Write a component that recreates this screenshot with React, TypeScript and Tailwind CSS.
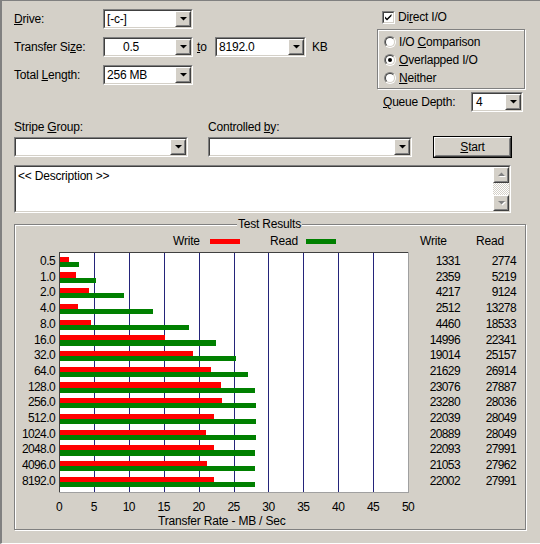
import React from "react";

const sizes = ["0.5", "1.0", "2.0", "4.0", "8.0", "16.0", "32.0", "64.0", "128.0", "256.0", "512.0", "1024.0", "2048.0", "4096.0", "8192.0"];
const writes = [1331, 2359, 4217, 2512, 4460, 14996, 19014, 21629, 23076, 23280, 22039, 20889, 22093, 21053, 22002];
const reads = [2774, 5219, 9124, 13278, 18533, 22341, 25157, 26914, 27887, 28036, 28049, 28049, 27991, 27962, 27991];

const ROW = 15.71;
const PX_PER_MB = 6.98;

const Sunken = ({ className = "", children }: { className?: string; children?: React.ReactNode }) => (
  <div className={`border border-t-[#808080] border-l-[#808080] border-r-white border-b-white ${className}`}>
    <div className="flex h-full w-full border border-t-[#404040] border-l-[#404040] border-r-[#d4d0c8] border-b-[#d4d0c8] bg-white">
      {children}
    </div>
  </div>
);

const Raised = ({ className = "", children }: { className?: string; children?: React.ReactNode }) => (
  <div className={`border border-t-white border-l-white border-r-[#404040] border-b-[#404040] ${className}`}>
    <div className="flex h-full w-full items-center justify-center border border-t-[#d4d0c8] border-l-[#d4d0c8] border-r-[#808080] border-b-[#808080] bg-[#d4d0c8]">
      {children}
    </div>
  </div>
);

const Arrow = ({ up = false, disabled = false }: { up?: boolean; disabled?: boolean }) => (
  <svg width="9" height="6" viewBox="0 0 9 6">
    {disabled && <path d={up ? "M2 5h7L5.5 1.5z" : "M2 2h7L5.5 5.5z"} fill="#fff" />}
    <path d={up ? "M1 4h7L4.5 0.5z" : "M1 1h7L4.5 4.5z"} fill={disabled ? "#808080" : "#000"} />
  </svg>
);

const Combo = ({ className = "", value = "", textClass = "pl-[2px]" }: { className?: string; value?: string; textClass?: string }) => (
  <Sunken className={`h-[20px] ${className}`}>
    <div className={`flex flex-1 items-center overflow-hidden whitespace-nowrap ${textClass}`}>{value}</div>
    <Raised className="h-full w-[16px]">
      <Arrow />
    </Raised>
  </Sunken>
);

const Radio = ({ checked = false }: { checked?: boolean }) => (
  <div className="h-[12px] w-[12px] rounded-full border border-t-[#808080] border-l-[#808080] border-r-white border-b-white">
    <div className="flex h-full w-full items-center justify-center rounded-full border border-t-[#404040] border-l-[#404040] border-r-[#d4d0c8] border-b-[#d4d0c8] bg-white">
      {checked && <div className="h-[4px] w-[4px] rounded-full bg-black" />}
    </div>
  </div>
);

const etched = "border border-[#808080] shadow-[inset_1px_1px_0_#fff,1px_1px_0_#fff]";

const Plot = () => (
  <svg width="350" height="241" viewBox="0 0 350 241" shapeRendering="crispEdges" className="block">
    <rect x="0" y="0" width="350" height="241" fill="#fff" />
    {[1, 2, 3, 4, 5, 6, 7, 8, 9].map((k) => (
      <line key={k} x1={k * 34.9 + 0.5} y1="1" x2={k * 34.9 + 0.5} y2="240" stroke="#24247a" strokeWidth="1" />
    ))}
    {sizes.map((s, i) => (
      <g key={s}>
        <rect x="1" y={4.7 + i * ROW} width={(writes[i] / 1000) * PX_PER_MB} height="5.2" fill="#ff0000" />
        <rect x="1" y={9.9 + i * ROW} width={(reads[i] / 1000) * PX_PER_MB} height="5.1" fill="#008000" />
      </g>
    ))}
    <line x1="0.5" y1="0" x2="0.5" y2="241" stroke="#404040" />
    <line x1="0" y1="0.5" x2="350" y2="0.5" stroke="#404040" />
    <line x1="349.5" y1="0" x2="349.5" y2="241" stroke="#a0a0a0" />
    <line x1="0" y1="240.5" x2="350" y2="240.5" stroke="#a0a0a0" />
  </svg>
);

const App = () => {
  return (
    <div className="flex h-[544px] w-[540px] flex-col overflow-hidden border-t border-l-2 border-b border-t-[#808080] border-l-[#808080] border-b-white bg-[#d4d0c8] font-['Liberation_Sans',Arial,sans-serif] text-[12px] leading-[14px] tracking-[-0.2px] text-black">
      {/* top settings */}
      <div className="flex h-[114px]">
        <div className="flex w-[375px] flex-col gap-[8px] pl-[12px] pt-[8px]">
          <div className="flex h-[20px] items-center">
            <span className="w-[89px]"><u>D</u>rive:</span>
            <Combo className="w-[90px]" value="[-c-]" />
          </div>
          <div className="flex h-[20px] items-center">
            <span className="w-[89px]">Transfer Si<u>z</u>e:</span>
            <Combo className="w-[90px]" value="0.5" textClass="pl-[18px]" />
            <span className="w-[22px] pl-[4px]"><u>t</u>o</span>
            <Combo className="w-[91px]" value="8192.0" />
            <span className="pl-[6px]">KB</span>
          </div>
          <div className="flex h-[20px] items-center">
            <span className="w-[89px]">Total <u>L</u>ength:</span>
            <Combo className="w-[90px]" value="256 MB" />
          </div>
        </div>

        <div className="flex w-[148px] flex-col pt-[9px]">
          <div className="flex h-[14px] items-center pl-[5px]">
            <Sunken className="h-[13px] w-[13px]">
              <svg width="9" height="9" viewBox="0 0 9 9" className="m-auto">
                <path d="M1 3.5l2 2L7.5 1v2L3 7.5 1 5.5z" fill="#000" />
              </svg>
            </Sunken>
            <span className="pl-[3px]">Di<u>r</u>ect I/O</span>
          </div>
          <div className={`mt-[5px] flex h-[60px] shrink-0 flex-col pl-[6px] pt-[3px] ${etched}`}>
            {[
              { label: <>I/O <u>C</u>omparison</>, checked: false },
              { label: <><u>O</u>verlapped I/O</>, checked: true },
              { label: <><u>N</u>either</>, checked: false },
            ].map((r, i) => (
              <div key={i} className="flex h-[18px] shrink-0 items-center gap-[3px]">
                <Radio checked={r.checked} />
                <span>{r.label}</span>
              </div>
            ))}
          </div>
          <div className="mt-[3px] flex h-[20px] items-center pl-[6px]">
            <span className="w-[88px]"><u>Q</u>ueue Depth:</span>
            <Combo className="w-[52px]" value="4" textClass="pl-[3px]" />
          </div>
        </div>
      </div>

      {/* stripe / controlled / start */}
      <div className="flex items-end pl-[12px] pt-[5px]">
        <div className="flex w-[174px] flex-col gap-[3px]">
          <span>Stripe <u>G</u>roup:</span>
          <Combo className="w-full" />
        </div>
        <div className="ml-[20px] flex w-[204px] flex-col gap-[3px]">
          <span>Controlled <u>b</u>y:</span>
          <Combo className="w-full" />
        </div>
        <div className="mb-[-1px] ml-[21px] h-[22px] w-[79px] border border-black">
          <Raised className="h-full w-full">
            <span><u>S</u>tart</span>
          </Raised>
        </div>
      </div>

      {/* description */}
      <Sunken className="ml-[12px] mt-[8px] h-[48px] w-[497px]">
        <div className="flex-1 pl-[2px] pt-[2px]">&lt;&lt; Description &gt;&gt;</div>
        <div className="flex w-[16px] flex-col">
          <Raised className="h-[16px] w-[16px]">
            <Arrow up disabled />
          </Raised>
          <div className="flex-1 bg-[repeating-conic-gradient(#ffffff_0_25%,#d4d0c8_0_50%)] bg-[length:2px_2px]" />
          <Raised className="h-[16px] w-[16px]">
            <Arrow disabled />
          </Raised>
        </div>
      </Sunken>

      {/* test results */}
      <div className={`relative ml-[12px] mt-[11px] h-[306px] w-[512px] ${etched}`}>
        <span className="absolute left-[222px] top-[-8px] bg-[#d4d0c8] px-[1px]">Test Results</span>

        <div className="mt-[9px] flex h-[14px] items-center pl-[158px]">
          <span className="w-[37px]">Write</span>
          <div className="h-[5px] w-[30px] bg-[#ff0000]" />
          <span className="box-content w-[36px] pl-[30px]">Read</span>
          <div className="h-[5px] w-[30px] bg-[#008000]" />
          <span className="ml-[84px] w-[56px]">Write</span>
          <span>Read</span>
        </div>

        <div className="mt-[4px] flex tracking-[-0.6px]">
          <div className="flex w-[40px] flex-col items-end pt-[2px]">
            {sizes.map((s) => (
              <div key={s} className="h-[15.71px] leading-[15.71px]">{s}</div>
            ))}
          </div>
          <div className="w-[4px]" />
          <Plot />
          <div className="flex w-[51px] flex-col items-end pt-[2px]">
            {writes.map((v, i) => (
              <div key={i} className="h-[15.71px] leading-[15.71px]">{v}</div>
            ))}
          </div>
          <div className="flex w-[56px] flex-col items-end pt-[2px]">
            {reads.map((v, i) => (
              <div key={i} className="h-[15.71px] leading-[15.71px]">{v}</div>
            ))}
          </div>
        </div>

        <div className="relative mt-[7px] h-[14px] tracking-[-0.6px]">
          {[0, 5, 10, 15, 20, 25, 30, 35, 40, 45, 50].map((t, k) => (
            <span key={t} className="absolute top-0 -translate-x-1/2" style={{ left: 44 + k * 34.9 }}>
              {t}
            </span>
          ))}
        </div>
        <div className="h-[14px] pl-[143px]">Transfer Rate - MB / Sec</div>
      </div>
    </div>
  );
};

export default App;
